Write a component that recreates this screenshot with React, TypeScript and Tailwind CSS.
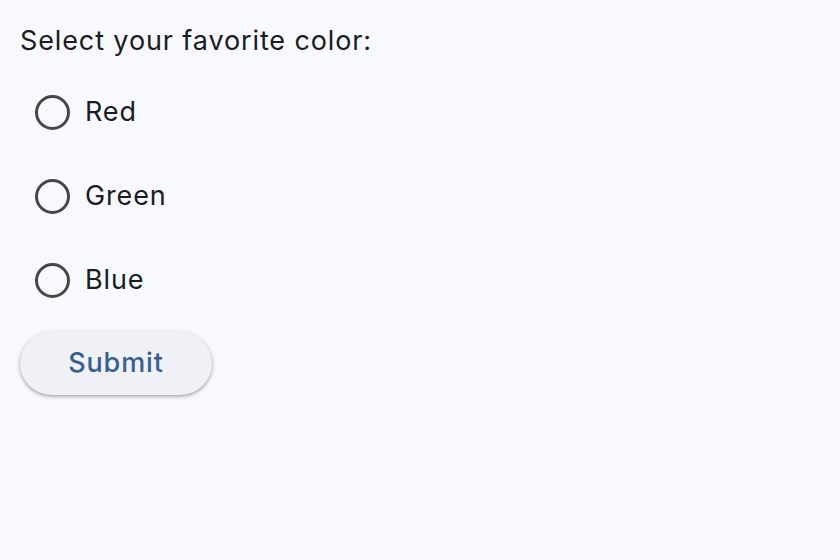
import React, { useState } from "react";

const colors = ["Red", "Green", "Blue"];

const App: React.FC = () => {
    const [selected, setSelected] = useState<string | null>(null);

    return (
        <div className="min-h-[560px] w-full bg-[#f8f9ff] px-[20px] pt-[12px] font-['Inter',sans-serif] tracking-[0.055em] text-[#191c20]">
            <div className="h-[58px] text-[27px] leading-[58px]">Select your favorite color:</div>

            {colors.map((c) => (
                <label key={c} className="flex h-[84px] cursor-pointer items-center pl-[15px]">
                    <span
                        onClick={() => setSelected(c)}
                        className="flex h-[35px] w-[35px] items-center justify-center rounded-full border-[3.5px] border-[#43474e]"
                    >
                        {selected === c && <span className="h-[17px] w-[17px] rounded-full bg-[#36618e]" />}
                    </span>
                    <span className="ml-[15px] text-[27px]">{c}</span>
                </label>
            ))}

            <button
                type="button"
                className="mt-[10px] flex h-[63px] w-[192px] items-center justify-center rounded-full bg-[#f0f1f7] text-[27px] font-medium text-[#36618e] shadow-[0_1.5px_3px_rgba(0,0,0,0.25),0_1.5px_5px_1px_rgba(0,0,0,0.1)]"
            >
                Submit
            </button>
        </div>
    );
};

export default App;
